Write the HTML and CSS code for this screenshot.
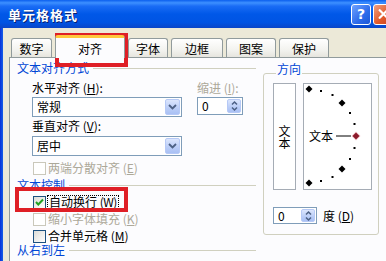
FILE: index.html
```html
<!DOCTYPE html>
<html>
<head>
<meta charset="utf-8">
<link rel="stylesheet" href="styles.css">
</head>
<body>
<div class="window">
  <div class="titlebar">
    <span class="title">单元格格式</span>
    <span class="tb-spacer"></span>
    <span class="btn-help">?</span>
    <span class="btn-close"><svg width="20" height="20" viewBox="0 0 20 20"><path d="M6 6 L14 14 M14 6 L6 14" stroke="#fff" stroke-width="2.4" stroke-linecap="round"/></svg></span>
  </div>
  <div class="main">
    <div class="frame"></div>
    <div class="content">
      <div class="tabs">
        <div class="tab t1">数字</div>
        <div class="tab sel">对齐</div>
        <div class="tab t3">字体</div>
        <div class="tab t4">边框</div>
        <div class="tab t5">图案</div>
        <div class="tab t6">保护</div>
      </div>
      <div class="panel">
        <div class="left">
          <div class="section"><span class="sec-label">文本对齐方式</span><span class="sec-line"></span></div>
          <div class="align">
            <div class="lbl">水平对齐 (<u>H</u>):</div>
            <div class="lbl dis">缩进 (<u>I</u>):</div>
            <div class="combo"><span class="cv">常规</span><span class="dd"><svg width="9" height="6" viewBox="0 0 9 6"><path d="M1 1 L4.5 4.5 L8 1" fill="none" stroke="#4D6185" stroke-width="1.8"/></svg></span></div>
            <div class="spin"><span class="sv">0</span><span class="sb"><svg width="7" height="12" viewBox="0 0 7 12"><path d="M1 4.5 L3.5 2 L6 4.5 M1 7.5 L3.5 10 L6 7.5" fill="none" stroke="#4D6185" stroke-width="1.5"/></svg></span></div>
            <div class="lbl lbl2">垂直对齐 (<u>V</u>):</div>
            <div></div>
            <div class="combo combo2"><span class="cv">居中</span><span class="dd"><svg width="9" height="6" viewBox="0 0 9 6"><path d="M1 1 L4.5 4.5 L8 1" fill="none" stroke="#4D6185" stroke-width="1.8"/></svg></span></div>
          </div>
          <div class="cbrow r1 dis"><span class="cb cb-dis"></span><span>两端分散对齐 (<u>E</u>)</span></div>
          <div class="section s2"><span class="sec-label">文本控制</span><span class="sec-line"></span></div>
          <div class="cbrow r2"><span class="cb"><svg width="11" height="11" viewBox="0 0 11 11"><path d="M2 5 L4.3 7.5 L9 2.5" fill="none" stroke="#21A121" stroke-width="2"/></svg></span><span class="focus">自动换行 <span class="key">(<u>W</u>)</span></span></div>
          <div class="cbrow r3 dis"><span class="cb cb-dis"></span><span>缩小字体填充 (<u>K</u>)</span></div>
          <div class="cbrow r4"><span class="cb"></span><span>合并单元格 (<u>M</u>)</span></div>
          <div class="section s3"><span class="sec-label">从右到左</span><span class="sec-line"></span></div>
        </div>
        <fieldset class="orient">
          <legend>方向</legend>
          <div class="boxes">
            <div class="vbox"><span class="vtext">文本</span></div>
            <div class="hbox">
              <svg class="dial" width="69" height="107" viewBox="0 0 69 107">
                <g fill="#000">
                  <path d="M6 2.5 L9.5 6 L6 9.5 L2.5 6 Z"/>
                  <rect x="17" y="7" width="2" height="2"/>
                  <rect x="28.5" y="11" width="2" height="2"/>
                  <path d="M39 16.5 L42.5 20 L39 23.5 L35.5 20 Z"/>
                  <rect x="46" y="29" width="2" height="2"/>
                  <rect x="50.5" y="40" width="2" height="2"/>
                  <rect x="50.5" y="64" width="2" height="2"/>
                  <rect x="46" y="75" width="2" height="2"/>
                  <path d="M39 82.5 L42.5 86 L39 89.5 L35.5 86 Z"/>
                  <rect x="28.5" y="93" width="2" height="2"/>
                  <rect x="17" y="97" width="2" height="2"/>
                  <path d="M6 96.5 L9.5 100 L6 103.5 L2.5 100 Z"/>
                </g>
                <line x1="33" y1="53" x2="48" y2="53" stroke="#000" stroke-width="1"/>
                <path d="M53 48.5 L57.5 53 L53 57.5 L48.5 53 Z" fill="#F4C6CC"/>
                <path d="M53 49.5 L56.5 53 L53 56.5 L49.5 53 Z" fill="#8B1A2A"/>
              </svg>
              <span class="dial-text">文本</span>
            </div>
          </div>
          <div class="deg">
            <div class="spin spin-deg"><span class="sv">0</span><span class="sb"><svg width="7" height="12" viewBox="0 0 7 12"><path d="M1 4.5 L3.5 2 L6 4.5 M1 7.5 L3.5 10 L6 7.5" fill="none" stroke="#4D6185" stroke-width="1.5"/></svg></span></div>
            <span class="deg-lbl">度 (<u>D</u>)</span>
          </div>
        </fieldset>
      </div>
    </div>
  </div>
  <div class="mark mark1"></div>
  <div class="mark mark2"></div>
</div>
</body>
</html>
```

FILE: styles.css
```css
* { box-sizing: border-box; }
html, body { margin: 0; padding: 0; }
body {
  font-family: "Noto Sans CJK SC", "Noto Sans", sans-serif;
  font-size: 12px;
  color: #000;
  background: #ECE9D8;
}
.window {
  position: relative;
  width: 386px;
  height: 261px;
  overflow: hidden;
  background: #ECE9D8;
}
.titlebar {
  height: 28px;
  display: flex;
  align-items: center;
  padding-left: 8px;
  background: linear-gradient(#0B5FEE 0%, #3D90FF 10%, #1A6CF5 22%, #0058E8 50%, #0054E3 80%, #0A46C8 100%);
}
.title {
  color: #fff;
  font-weight: bold;
  font-size: 13px;
  letter-spacing: 1px;
  text-shadow: 1px 1px 0 #0A1F6E;
  margin-top: 1px;
}
.tb-spacer { flex: 1; }
.btn-help {
  width: 20px;
  height: 21px;
  border: 1px solid #fff;
  border-radius: 3px;
  background: linear-gradient(135deg, #6FA2FF, #2D6BEA 60%, #1C57D6);
  color: #fff;
  font-family: "DejaVu Sans", sans-serif;
  font-weight: bold;
  font-size: 14px;
  display: flex;
  align-items: center;
  justify-content: center;
  margin-right: 2px;
}
.btn-close {
  width: 21px;
  height: 21px;
  border: 1px solid #fff;
  border-radius: 3px;
  background: linear-gradient(135deg, #F0A080, #E15A2C 55%, #C8401C);
  display: flex;
  align-items: center;
  justify-content: center;
  margin-right: -8px;
}
.main {
  display: flex;
  height: 233px;
}
.frame {
  width: 3px;
  background: linear-gradient(90deg, #0831D9, #1660E8);
}
.content {
  flex: 1;
  padding-left: 6px;
  display: flex;
  flex-direction: column;
}
.tabs {
  height: 29px;
  display: flex;
  align-items: flex-end;
  padding-left: 2px;
  gap: 3px;
}
.tab {
  height: 19px;
  border: 1px solid #919B9C;
  border-bottom: none;
  border-radius: 3px 3px 0 0;
  background: linear-gradient(#FFFFFF, #F3F3EF 60%, #E6E5DE);
  display: flex;
  align-items: center;
  justify-content: center;
  padding-top: 1px;
}
.t1 { width: 41px; }
.sel {
  width: 70px;
  height: 23px;
  margin-bottom: -1px;
  background: #FCFCFE;
  border-top: 3px solid #FFC83C;
  position: relative;
  z-index: 1;
  padding-top: 0;
}
.t3 { width: 40px; }
.t4 { width: 52px; }
.t5 { width: 50px; }
.t6 { width: 50px; }
.panel {
  flex: 1;
  display: flex;
  background: #FCFCFE;
  border-top: 1px solid #919B9C;
  border-left: 1px solid #919B9C;
}
.left {
  width: 253px;
  padding: 3px 7px 0 7px;
  display: flex;
  flex-direction: column;
}
.section {
  height: 14px;
  display: flex;
  align-items: center;
  line-height: 14px;
}
.sec-label { color: #0046D5; }
.sec-line {
  flex: 1;
  height: 1px;
  margin-left: 4px;
  background: #D0D0BF;
  margin-top: 1px;
}
.align {
  display: grid;
  grid-template-columns: 150px 46px;
  column-gap: 15px;
  margin-left: 15px;
  margin-top: 6px;
}
.lbl { height: 14px; line-height: 14px; }
.lbl2 { margin-top: 2px; }
.dis { color: #ACA899; }
.combo {
  height: 20px;
  margin-top: 2px;
  border: 1px solid #7F9DB9;
  background: #fff;
  display: flex;
  align-items: center;
  line-height: 14px;
}
.combo2 { margin-top: 3px; }
.cv { flex: 1; padding-left: 4px; }
.dd {
  width: 15px;
  height: 16px;
  margin-right: 1px;
  border: 1px solid #B6C9F6;
  border-radius: 2px;
  background: linear-gradient(#DCE6FD, #BACDF7 60%, #A9C0F4);
  display: flex;
  align-items: center;
  justify-content: center;
}
.spin {
  height: 18px;
  margin-top: 2px;
  border: 1px solid #7F9DB9;
  background: #fff;
  display: flex;
  align-items: center;
  line-height: 14px;
}
.sv { flex: 1; padding-left: 4px; }
.sb {
  width: 14px;
  height: 14px;
  margin-right: 1px;
  border: 1px solid #B6C9F6;
  border-radius: 2px;
  background: linear-gradient(#DCE6FD, #BACDF7 60%, #A9C0F4);
  display: flex;
  align-items: center;
  justify-content: center;
}
.cbrow {
  display: flex;
  align-items: center;
  padding-left: 16px;
  gap: 2px;
  line-height: 12px;
}
.r1 { height: 12px; margin-top: 6px; }
.s2 { height: 12px; margin-top: 5px; line-height: 12px; }
.r2 { height: 14px; margin-top: 4px; }
.r3 { height: 14px; margin-top: 3px; }
.r4 { height: 14px; margin-top: 3px; }
.s3 { height: 12px; margin-top: 1px; line-height: 12px; }
.cb {
  width: 13px;
  height: 13px;
  flex: none;
  border: 1px solid #1C5180;
  background: linear-gradient(135deg, #DCDCD7, #FFFFFF);
  display: flex;
  align-items: center;
  justify-content: center;
}
.cb-dis {
  border-color: #CAC8BB;
  background: #fff;
}
.focus {
  outline: 1px dotted #000;
  padding: 0 1px;
  line-height: 12px;
}
.key { letter-spacing: -0.5px; }
.orient {
  margin: 5px 0 0 0;
  padding: 0 0 12px 9px;
  width: 116px;
  height: 172px;
  border: 1px solid #D0D0BF;
  border-radius: 3px;
  align-self: flex-start;
}
.orient legend {
  color: #0046D5;
  padding: 0 1px;
  margin-left: 3px;
  height: 20px;
  line-height: 12px;
  padding-bottom: 8px;
}
.boxes {
  display: flex;
  gap: 7px;
}
.vbox {
  width: 23px;
  height: 107px;
  border: 1px solid #A5ACB5;
  background: #fff;
  display: flex;
  align-items: center;
  justify-content: center;
}
.vtext {
  writing-mode: vertical-rl;
  text-orientation: upright;
  line-height: 13px;
  margin-top: 1px;
}
.hbox {
  position: relative;
  width: 69px;
  height: 107px;
  border: 1px solid #A5ACB5;
  background: #fff;
}
.dial {
  position: absolute;
  left: -1px;
  top: -1px;
}
.dial-text {
  position: absolute;
  left: 5px;
  top: 45px;
  line-height: 14px;
}
.deg {
  display: flex;
  align-items: center;
  margin-top: 17px;
  gap: 6px;
  line-height: 14px;
}
.spin-deg {
  width: 44px;
  height: 17px;
  margin-top: 0;
}
.spin-deg .sb { height: 13px; }
.mark {
  position: absolute;
  border: 4px solid #DF1F26;
}
.mark1 { left: 55px; top: 33px; width: 73px; height: 34px; }
.mark2 { left: 15px; top: 187px; width: 113px; height: 25px; }
```
